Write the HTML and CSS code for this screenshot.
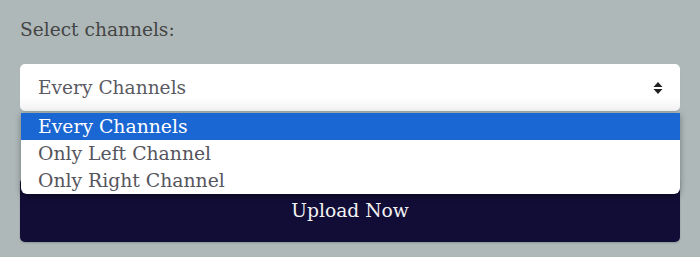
FILE: index.html
```html
<!DOCTYPE html>
<html>
<head>
<meta charset="utf-8">
<link rel="stylesheet" href="styles.css">
</head>
<body>
<div class="wrap">
  <div class="label">Select channels:</div>
  <div class="select">
    <span class="value">Every Channels</span>
    <svg class="arrows" width="10" height="12" viewBox="0 0 10 12">
      <path d="M5 0 L9.5 5 L0.5 5 Z M0.5 7 L9.5 7 L5 12 Z" fill="#222"/>
    </svg>
    <ul class="menu">
      <li class="opt active">Every Channels</li>
      <li class="opt">Only Left Channel</li>
      <li class="opt">Only Right Channel</li>
    </ul>
  </div>
  <button class="upload">Upload Now</button>
</div>
</body>
</html>
```
FILE: styles.css
```css
html, body { margin: 0; padding: 0; }
body {
  background: #aeb8b9;
  font-family: "DejaVu Serif", "Liberation Serif", serif;
  width: 700px;
  height: 257px;
  overflow: hidden;
}
.wrap {
  padding: 18px 20px 0 20px;
}
.label {
  font-size: 18.6px;
  line-height: 24px;
  color: #454545;
}
.select {
  position: relative;
  margin-top: 22px;
  height: 47px;
  background: linear-gradient(#ffffff 70%, #f2f2f2);
  border-radius: 5px;
  display: flex;
  align-items: center;
  justify-content: space-between;
  padding: 0 17px 0 18px;
  box-shadow: 0 1px 1px rgba(0,0,0,0.08);
}
.value {
  font-size: 18.6px;
  color: #5a5a62;
}
.arrows { display: block; margin-top: 0; }
.menu {
  position: absolute;
  left: 1px;
  right: 0;
  top: 49px;
  margin: 0;
  padding: 0;
  list-style: none;
  background: #fff;
  border-radius: 0 0 6px 6px;
  box-shadow: 0 2px 6px rgba(0,0,0,0.35);
  overflow: hidden;
  z-index: 2;
}
.opt {
  font-size: 18.8px;
  height: 27px;
  line-height: 27px;
  padding-left: 17px;
  color: #55555d;
}
.opt.active {
  background: #1a66d2;
  color: #fff;
}
.upload {
  display: block;
  width: 100%;
  margin-top: 67px;
  height: 64px;
  border: none;
  border-radius: 5px;
  background: #120d36;
  color: #f2f2f2;
  font-family: "DejaVu Serif", "Liberation Serif", serif;
  font-size: 18.7px;
  padding: 0;
  box-shadow: 0 1px 2px rgba(0,0,0,0.2);
}
```
